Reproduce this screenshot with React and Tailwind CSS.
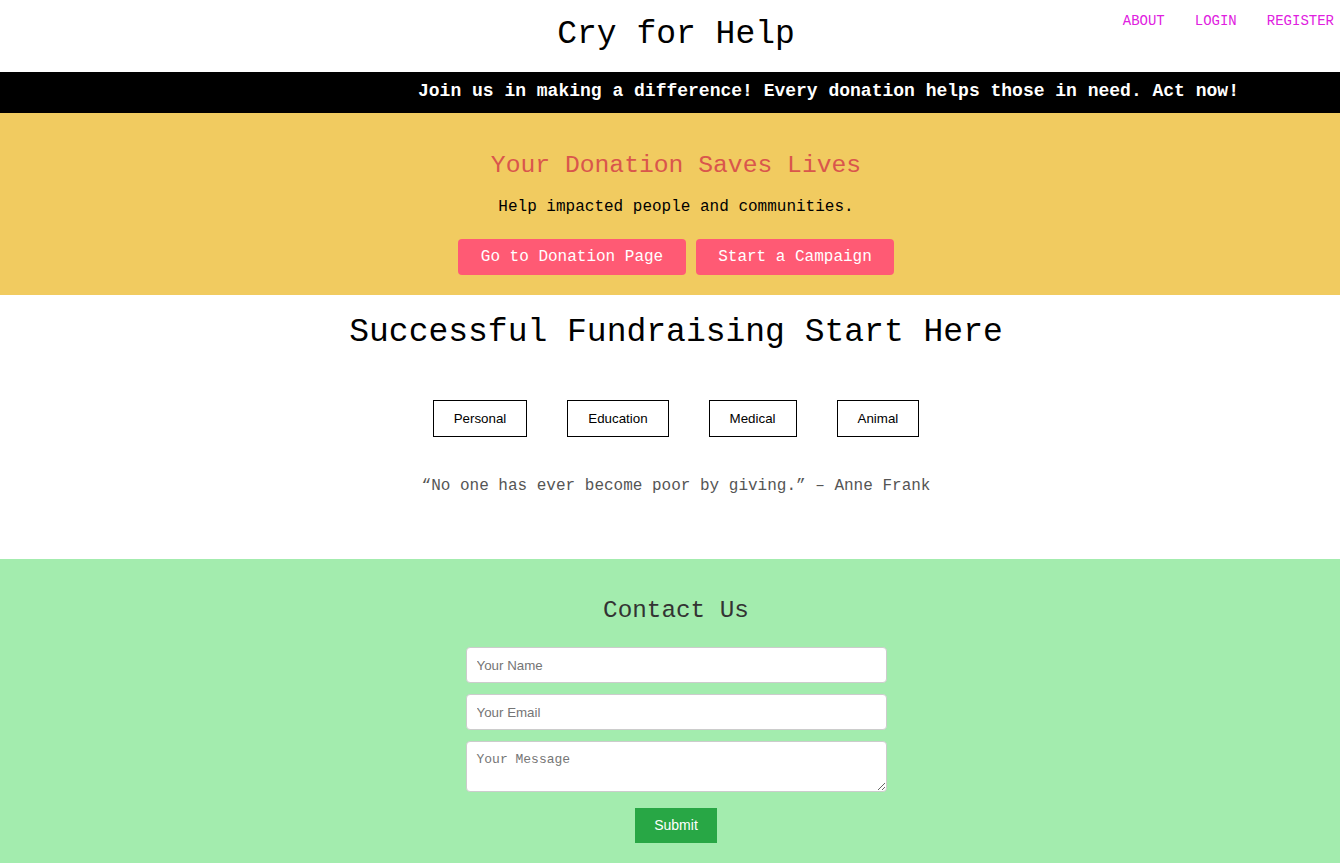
import { useState } from "react";

const mono = "font-['Liberation_Mono','DejaVu_Sans_Mono',monospace]";
const arial = "font-['Liberation_Sans',Arial,sans-serif]";

const categories = ["Personal", "Education", "Medical", "Animal"];

export default function App() {
  const [form, setForm] = useState({ name: "", email: "", message: "" });

  return (
    <div className={`min-h-screen bg-white ${mono}`}>
      {/* Header */}
      <header className="relative h-[72px] flex justify-center pl-[12px]">
        <h1 className="mt-[15px] text-[33px] leading-[40px] text-black">Cry for Help</h1>
        <nav className="absolute top-[13px] right-[6px] flex gap-[30px] text-[14px] leading-[16px] text-[#e020e0]">
          <a href="#">ABOUT</a>
          <a href="#">LOGIN</a>
          <a href="#">REGISTER</a>
        </nav>
      </header>

      {/* Banner */}
      <div className="h-[41px] bg-black flex items-center pl-[418px] pb-[4px] overflow-hidden">
        <p className="text-white font-bold text-[18px] leading-[22px] whitespace-nowrap">
          Join us in making a difference! Every donation helps those in need. Act now!
        </p>
      </div>

      {/* Hero */}
      <section className="h-[182px] bg-[#f1cb60] flex flex-col items-center pl-[12px]">
        <h2 className="mt-[37px] text-[24.7px] leading-[30px] text-[#d9564c]">Your Donation Saves Lives</h2>
        <p className="mt-[17px] text-[16px] leading-[20px] text-black">Help impacted people and communities.</p>
        <div className="mt-[22px] flex gap-[10px]">
          <button className="w-[228px] h-[36px] rounded-[4px] bg-[#ff5a74] text-white text-[16px]">
            Go to Donation Page
          </button>
          <button className="w-[198px] h-[36px] rounded-[4px] bg-[#ff5a74] text-white text-[16px]">
            Start a Campaign
          </button>
        </div>
      </section>

      {/* Fundraising */}
      <section className="h-[264px] flex flex-col items-center pl-[12px]">
        <h2 className="mt-[18px] text-[33px] leading-[40px] text-black">Successful Fundraising Start Here</h2>
        <div className="mt-[47px] flex gap-[40px]">
          {categories.map((c) => (
            <button
              key={c}
              className={`h-[37px] px-[20px] border border-black bg-white text-[13.33px] text-black ${arial}`}
            >
              {c}
            </button>
          ))}
        </div>
        <p className="mt-[39px] text-[16px] leading-[20px] text-[#555]">
          “No one has ever become poor by giving.” – Anne Frank
        </p>
      </section>

      {/* Contact */}
      <section className="h-[304px] bg-[#a3ecae] flex flex-col items-center pl-[12px]">
        <h2 className="mt-[37px] text-[24.3px] leading-[30px] text-[#333]">Contact Us</h2>
        <form className="mt-[21px] w-[421px] flex flex-col gap-[11px]" onSubmit={(e) => e.preventDefault()}>
          <input
            className={`h-[36px] px-[10px] rounded-[4px] border border-[#ccc] bg-white text-[13.33px] placeholder-[#757575] outline-none ${arial}`}
            placeholder="Your Name"
            value={form.name}
            onChange={(e) => setForm((p) => ({ ...p, name: e.target.value }))}
          />
          <input
            type="email"
            className={`h-[36px] px-[10px] rounded-[4px] border border-[#ccc] bg-white text-[13.33px] placeholder-[#757575] outline-none ${arial}`}
            placeholder="Your Email"
            value={form.email}
            onChange={(e) => setForm((p) => ({ ...p, email: e.target.value }))}
          />
          <textarea
            className="h-[51px] px-[10px] py-[10px] rounded-[4px] border border-[#ccc] bg-white text-[13px] leading-[15px] placeholder-[#757575] outline-none"
            placeholder="Your Message"
            value={form.message}
            onChange={(e) => setForm((p) => ({ ...p, message: e.target.value }))}
          />
          <div className="mt-[5px] flex justify-center">
            <button type="submit" className={`w-[82px] h-[35px] bg-[#28a745] text-white text-[14px] ${arial}`}>
              Submit
            </button>
          </div>
        </form>
      </section>
    </div>
  );
}
